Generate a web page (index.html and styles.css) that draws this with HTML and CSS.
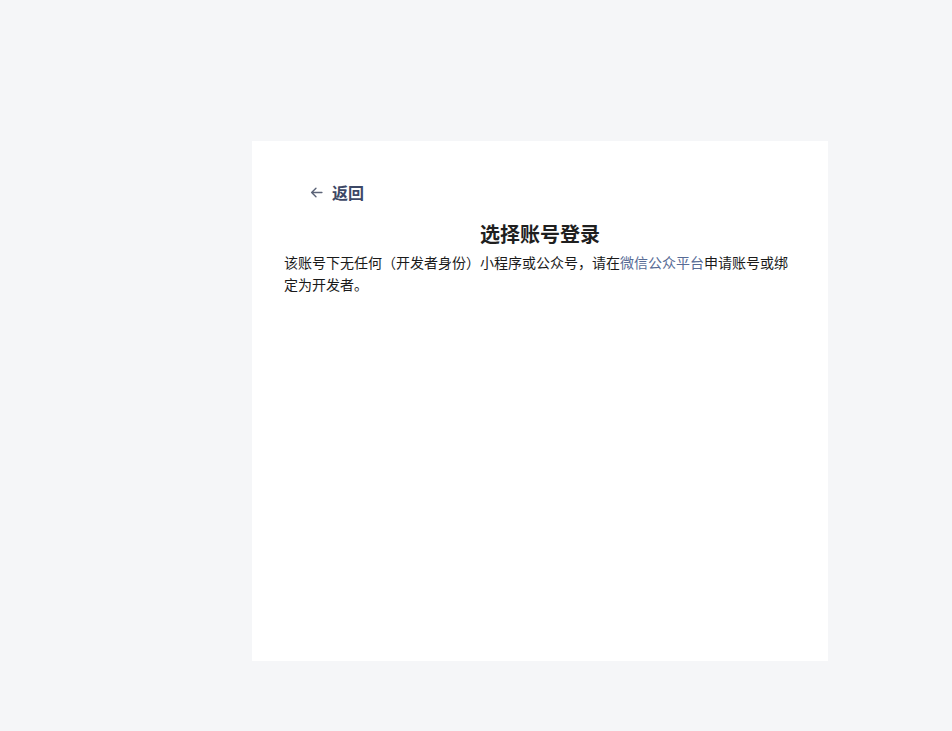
FILE: index.html
```html
<!DOCTYPE html>
<html lang="zh-CN">
  <head>
    <meta charset="UTF-8" />
    <meta name="viewport" content="width=device-width, initial-scale=1.0" />
    <title>选择账号登录</title>
    <link rel="stylesheet" href="styles.css">
  </head>
  <body>
    <div class="page">
      <div class="card">
        <a class="back" href="#">
          <svg class="back-icon" viewBox="0 0 12 12" width="13" height="13">
            <path d="M11 6H1.5M5.5 2L1.5 6l4 4" fill="none" stroke="currentColor" stroke-width="1.3" stroke-linecap="round" stroke-linejoin="round" />
          </svg>
          <span>返回</span>
        </a>
        <h2 class="title">选择账号登录</h2>
        <p class="desc">
          该账号下无任何（开发者身份）小程序或公众号，请在<a class="link" href="#">微信公众平台</a>申请账号或绑定为开发者。
        </p>
      </div>
    </div>
  </body>
</html>
```

FILE: styles.css
```css
* {
  margin: 0;
  padding: 0;
  box-sizing: border-box;
}

body {
  font-family: "Liberation Sans", "Noto Sans CJK SC", sans-serif;
  background-color: #f5f6f8;
  color: #1a1a1a;
}

.page {
  display: flex;
  padding: 141px 0 70px 252px;
}

.card {
  width: 576px;
  height: 520px;
  background-color: #fff;
  padding: 32px 32px;
}

.back {
  display: flex;
  align-items: center;
  gap: 9px;
  margin-left: 26px;
  height: 24px;
  margin-top: 7px;
  font-size: 16px;
  font-weight: bold;
  color: #3d4866;
  text-decoration: none;
}

.back-icon {
  color: #5c6478;
}

.title {
  text-align: center;
  font-size: 20px;
  font-weight: bold;
  line-height: 30px;
  margin-top: 16px;
  color: #1f1f1f;
}

.desc {
  font-size: 14px;
  line-height: 22px;
  margin-top: 2px;
  color: #1a1a1a;
}

.link {
  color: #576b95;
  text-decoration: none;
}
```
